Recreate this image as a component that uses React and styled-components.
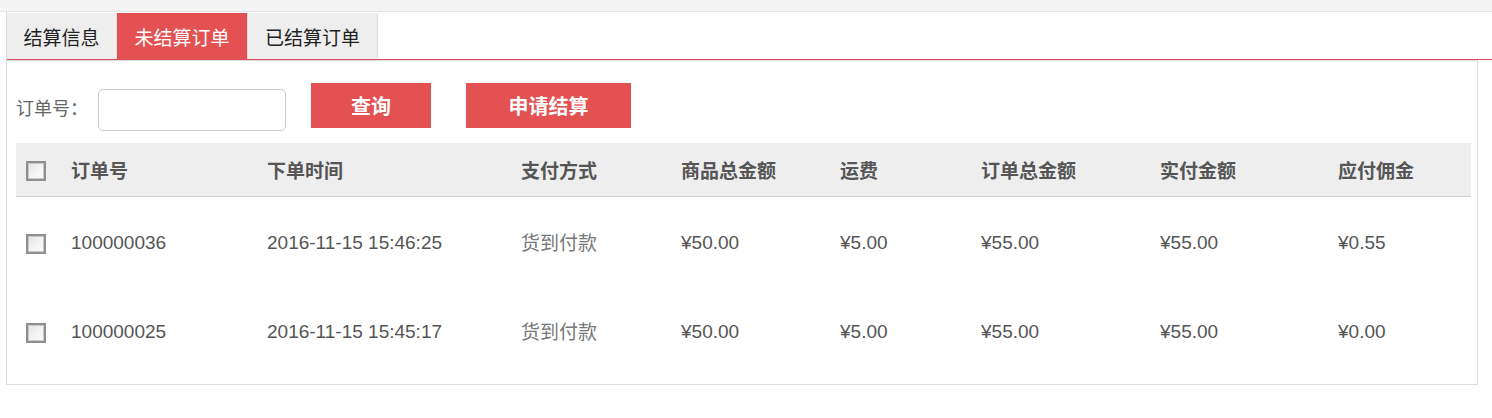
import React, { useState } from "react";
import styled, { createGlobalStyle } from "styled-components";

const GlobalStyle = createGlobalStyle`
  html, body {
    margin: 0;
    padding: 0;
    background: #fff;
    font-family: "Liberation Sans", "Noto Sans CJK SC", sans-serif;
  }
`;

const TopBand = styled.div`
  height: 11px;
  background: #f4f4f4;
  border-bottom: 1px solid #e6e6e6;
`;

const Frame = styled.div`
  margin-left: 6px;
  border-left: 1px solid #dcdcdc;
`;

const TabBar = styled.div`
  display: flex;
  height: 46px;
  padding-top: 1px;
  border-bottom: 1px solid #dc4a5e;
`;

const Tab = styled.div`
  display: flex;
  align-items: center;
  justify-content: center;
  width: ${({ $w }) => $w}px;
  background: ${({ $active }) => ($active ? "#e35152" : "#eeeeee")};
  color: ${({ $active }) => ($active ? "#fff" : "#222")};
  border-right: 1px solid #dedede;
  font-family: "Noto Sans CJK SC", sans-serif;
  font-size: 19px;
  cursor: pointer;
`;

const Panel = styled.div`
  margin-right: 14px;
  border: 1px solid #dddddd;
  border-left: none;
  padding: 22px 6px 9px 9px;
`;

const SearchRow = styled.div`
  display: flex;
  align-items: center;
  height: 45px;
`;

const Label = styled.span`
  font-family: "Noto Sans CJK SC", sans-serif;
  font-size: 18px;
  color: #666;
  margin-right: 10px;
  margin-top: 2px;
`;

const Input = styled.input`
  width: 188px;
  height: 42px;
  box-sizing: border-box;
  border: 1px solid #cccccc;
  border-radius: 5px;
  margin-top: 8px;
  margin-right: 25px;
  outline: none;
`;

const RedButton = styled.button`
  width: ${({ $w }) => $w}px;
  height: 45px;
  margin-right: 35px;
  border: none;
  background: #e35152;
  color: #fff;
  font-family: "Noto Sans CJK SC", sans-serif;
  font-weight: bold;
  font-size: 20px;
  cursor: pointer;
`;

const Table = styled.div`
  margin-top: 15px;
`;

const Row = styled.div`
  display: grid;
  grid-template-columns: 55px 196px 254px 160px 159px 141px 179px 178px 1fr;
  align-items: center;
  height: ${({ $head }) => ($head ? "53px" : "89px")};
  background: ${({ $head }) => ($head ? "#eeeeee" : "transparent")};
  border-bottom: ${({ $head }) => ($head ? "1px solid #d0d0d0" : "none")};
  color: #555;
`;

const HeadCell = styled.div`
  font-family: "Noto Sans CJK SC", sans-serif;
  font-weight: bold;
  font-size: 19px;
  color: #555;
`;

const Cell = styled.div`
  font-size: 19px;
  padding-top: ${({ $offset }) => $offset || 0}px;
  color: ${({ $light }) => ($light ? "#777" : "#555")};
  font-family: ${({ $cjk }) =>
    $cjk ? '"Noto Sans CJK SC", sans-serif' : '"Liberation Sans", sans-serif'};
`;

const BoxCell = styled.div`
  padding-left: 10px;
  padding-top: ${({ $offset }) => $offset || 0}px;
  display: flex;
  align-items: center;
`;

const Check = styled.span`
  width: 20px;
  height: 20px;
  box-sizing: border-box;
  border: 2px solid #8f8f8f;
  outline: 1px solid #c8c8c8;
  outline-offset: -3px;
  background: linear-gradient(135deg, #e4e4e4 0%, #f6f6f6 60%, #fafafa 100%);
  cursor: pointer;
`;

const headers = ["订单号", "下单时间", "支付方式", "商品总金额", "运费", "订单总金额", "实付金额", "应付佣金"];

const orders = [
  { id: "100000036", time: "2016-11-15 15:46:25", pay: "货到付款", goods: "¥50.00", ship: "¥5.00", total: "¥55.00", paid: "¥55.00", fee: "¥0.55" },
  { id: "100000025", time: "2016-11-15 15:45:17", pay: "货到付款", goods: "¥50.00", ship: "¥5.00", total: "¥55.00", paid: "¥55.00", fee: "¥0.00" },
];

const tabs = [
  { label: "结算信息", w: 109 },
  { label: "未结算订单", w: 130 },
  { label: "已结算订单", w: 129 },
];

export default function App() {
  const [active, setActive] = useState(1);

  return (
    <>
      <GlobalStyle />
      <TopBand />
      <Frame>
        <TabBar>
          {tabs.map((t, i) => (
            <Tab key={t.label} $w={t.w} $active={i === active} onClick={() => setActive(i)}>
              {t.label}
            </Tab>
          ))}
        </TabBar>
        <Panel>
          <SearchRow>
            <Label>订单号：</Label>
            <Input type="text" />
            <RedButton $w={120}>查询</RedButton>
            <RedButton $w={165}>申请结算</RedButton>
          </SearchRow>
          <Table>
            <Row $head>
              <BoxCell $offset={2}>
                <Check />
              </BoxCell>
              {headers.map((h) => (
                <HeadCell key={h}>{h}</HeadCell>
              ))}
            </Row>
            {orders.map((o) => (
              <Row key={o.id}>
                <BoxCell $offset={4}>
                  <Check />
                </BoxCell>
                <Cell $offset={2}>{o.id}</Cell>
                <Cell $offset={2}>{o.time}</Cell>
                <Cell $cjk $light>{o.pay}</Cell>
                <Cell $offset={2}>{o.goods}</Cell>
                <Cell $offset={2}>{o.ship}</Cell>
                <Cell $offset={2}>{o.total}</Cell>
                <Cell $offset={2}>{o.paid}</Cell>
                <Cell $offset={2}>{o.fee}</Cell>
              </Row>
            ))}
          </Table>
        </Panel>
      </Frame>
    </>
  );
}
